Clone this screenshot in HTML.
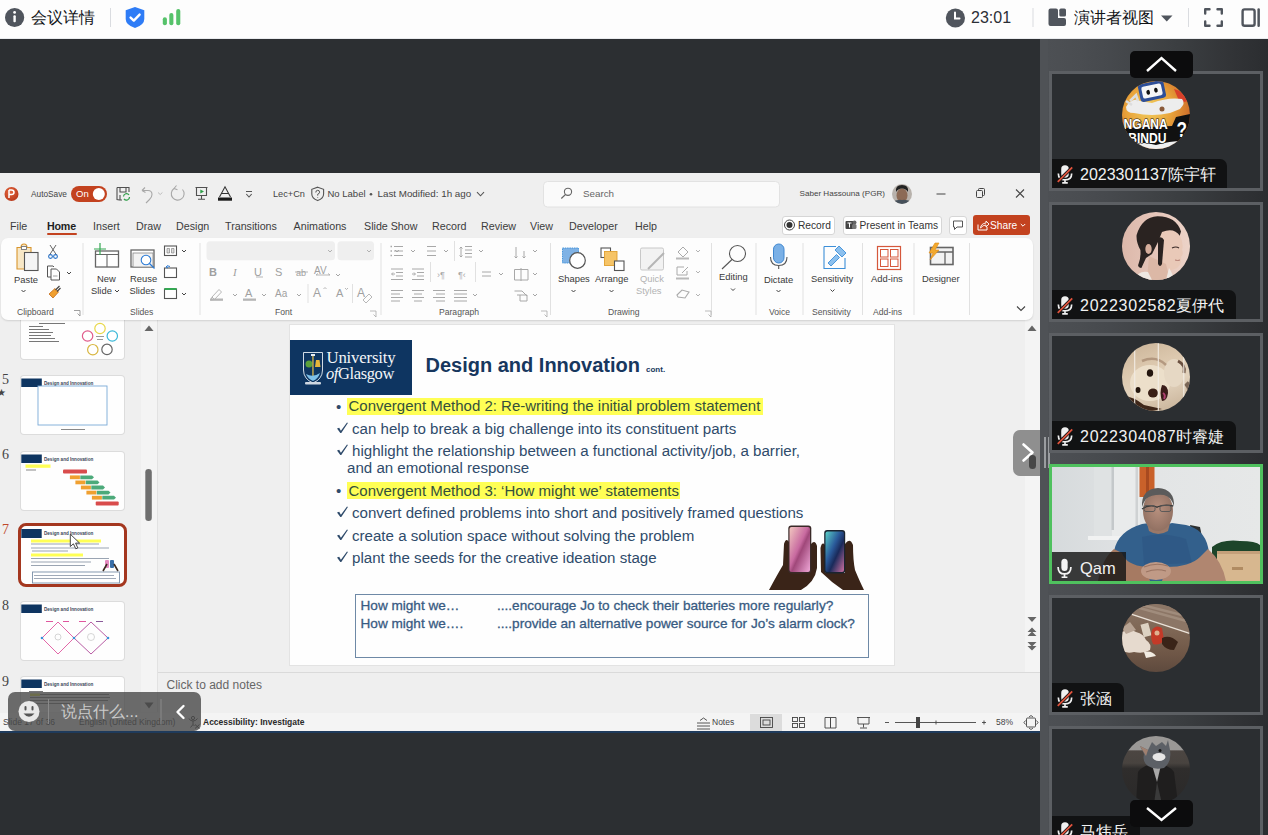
<!DOCTYPE html>
<html><head><meta charset="utf-8">
<style>
*{margin:0;padding:0;box-sizing:border-box}
html,body{width:1268px;height:835px;overflow:hidden;background:#2c2f32;font-family:"Liberation Sans",sans-serif;position:relative}
.a{position:absolute}
.t{position:absolute;white-space:nowrap;line-height:1}
/* top bar */
#top{left:0;top:0;width:1268px;height:39px;background:#fdfdfd;border-bottom:1px solid #e9ebee}
/* right panel */
#rp{left:1040px;top:39px;width:228px;height:796px;background:linear-gradient(90deg,#4f5256 0,#4f5256 8px,#4d5054 8px,#4a4d51 40px,#46494d 70px,#404346 110px,#393c3f 150px,#323437 190px,#2b2d30 228px)}
.tile{position:absolute;left:9px;width:214px;height:120px;border:3px solid #5c5f63;background:#2b2e31;overflow:hidden}
.lbl{position:absolute;left:0;bottom:0;height:29px;background:#111213;border-top-right-radius:7px;color:#f2f2f2;font-size:16px;line-height:31px;padding-left:28px;padding-right:11.5px;white-space:nowrap}
.lbl b{font-weight:normal;letter-spacing:0.75px}
.av{position:absolute;left:71px;top:10px;width:68px;height:68px;border-radius:50%;overflow:hidden}
/* ppt */
#ppt{left:0;top:173px;width:1040px;height:558px;background:#efefef;overflow:hidden}
</style></head><body>

<div id="top" class="a">
<svg class="a" style="left:0;top:0" width="1268" height="38">
 <circle cx="14.6" cy="17.5" r="9.6" fill="#50555d"/>
 <rect x="13.4" y="15.2" width="2.4" height="7" rx="1" fill="#fff"/>
 <circle cx="14.6" cy="12.4" r="1.4" fill="#fff"/>
 <rect x="110" y="8" width="1" height="19" fill="#dadce0"/>
 <path d="M135 7 L144.3 10.2 L144.3 19 Q144.3 25 135 28 Q125.7 25 125.7 19 L125.7 10.2 Z" fill="#2e7cf6"/>
 <path d="M130.6 17.6 L133.8 20.6 L139.6 14.6" stroke="#fff" stroke-width="2.4" fill="none" stroke-linecap="round" stroke-linejoin="round"/>
 <rect x="162.8" y="17.3" width="4.1" height="8" rx="2" fill="#55c26a"/>
 <rect x="169.3" y="13" width="4.1" height="12.3" rx="2" fill="#55c26a"/>
 <rect x="176.2" y="9" width="4.1" height="16.3" rx="2" fill="#55c26a"/>
 <circle cx="955.4" cy="18" r="9.6" fill="#50555d"/>
 <path d="M955 12.5 L955 18.5 L959.5 18.5" stroke="#fff" stroke-width="2" fill="none" stroke-linecap="round"/>
 <rect x="1032.5" y="8" width="1" height="19" fill="#dadce0"/>
 <path d="M1050.5 8.6 H1056 Q1058 8.6 1058 10.6 V18 H1064 Q1066 18 1066 20 V24 Q1066 26 1064 26 H1050.5 Q1048.5 26 1048.5 24 V10.6 Q1048.5 8.6 1050.5 8.6 Z" fill="#50555d"/>
 <rect x="1059.3" y="8.6" width="6.7" height="8" rx="1.6" fill="#50555d"/>
 <path d="M1161 15.5 H1172.5 L1166.75 21.5 Z" fill="#50555d"/>
 <rect x="1188" y="8" width="1" height="19" fill="#dadce0"/>
 <path d="M1205.2 13.5 V9.3 H1209.5 M1217.5 9.3 H1221.8 V13.5 M1221.8 21.5 V25.8 H1217.5 M1209.5 25.8 H1205.2 V21.5" stroke="#50555d" stroke-width="2.4" fill="none" stroke-linecap="round" stroke-linejoin="round"/>
 <rect x="1242.6" y="9.4" width="12" height="16.4" rx="2" stroke="#50555d" stroke-width="2.4" fill="none"/>
 <rect x="1257.4" y="8.2" width="2.5" height="18.8" rx="1.2" fill="#50555d"/>
</svg>
<div class="t" style="left:31px;top:9.5px;font-size:16px;color:#111317">会议详情</div>
<div class="t" style="left:971px;top:10px;font-size:16px;color:#2b2f36">23:01</div>
<div class="t" style="left:1074px;top:9.5px;font-size:16px;color:#111317">演讲者视图</div>
</div>
<div id="rp" class="a">
 <div class="a" style="left:4px;top:398px;width:1.5px;height:31px;background:#9a9da0"></div>
 <div class="a" style="left:8px;top:398px;width:1.5px;height:31px;background:#9a9da0"></div>
 <div class="tile" style="top:32px">
  <div class="av" style="left:69.5px;top:6.5px;background:radial-gradient(circle at 40% 40%,#f2d060 0,#e8a23a 40%,#d0702a 70%,#a04a20 100%)">
   <svg width="68" height="68">
    <path d="M52 8 Q62 10 66 20 L58 22Z" fill="#d8402a"/>
    <path d="M4 26 Q10 16 18 20 L30 22 Q46 16 60 18 Q64 22 58 28 L48 32 Q30 36 12 32 Q4 32 4 26Z" fill="#ededed"/>
    <path d="M8 20 L14 14 L16 20 M10 24 L4 20" stroke="#ddd" stroke-width="2.5" fill="none"/>
    <g transform="rotate(-12 30 10)"><rect x="17" y="1" width="26" height="18" rx="3" fill="#2e4f98"/><rect x="20" y="4" width="20" height="12" rx="2" fill="#f6f6f6"/><ellipse cx="26" cy="10.5" rx="1.8" ry="2.5" fill="#111"/><ellipse cx="34" cy="10" rx="1.8" ry="2.5" fill="#111"/></g>
    <circle cx="40" cy="28" r="2.5" fill="#8a5a3a"/>
    <path d="M0 47 L50 45 L54 36 L68 33 V60 L56 64 Q40 66 20 66 L0 64Z" fill="#111"/>
    <path d="M4 63 Q20 60 34 64 Q48 60 60 60 L56 68 H8Z" fill="#f0f0f0"/>
    <g transform="scale(0.78 1)" font-family="Liberation Sans" font-weight="bold" fill="#fff" stroke="#111" stroke-width="1.2" paint-order="stroke">
     <text x="2" y="48" font-size="15.5">NGANA</text>
     <text x="8" y="62" font-size="15.5">BINDU</text>
     <text x="70" y="56" font-size="22">?</text>
    </g>
   </svg>
  </div>
  <div class="lbl"><svg class="a" style="left:3px;top:5px" width="20" height="20" viewBox="0 0 18 18"><path d="M5.6 9 V4.6 Q5.6 1.2 9 1.2 Q12.4 1.2 12.4 4.6 V9 Q12.4 12.4 9 12.4 Q5.6 12.4 5.6 9Z" fill="#f0f0f0"/><path d="M3 8.5 Q3 14.3 9 14.3 Q15 14.3 15 8.5 M9 14.3 V17 M6.5 17 H11.5" stroke="#f0f0f0" stroke-width="1.5" fill="none"/><path d="M2.5 16 L15.5 3" stroke="#111" stroke-width="3"/><path d="M2.5 16 L15.5 3" stroke="#e0533d" stroke-width="1.6"/></svg>2023301137陈宇轩</div>
 </div>
 <div class="tile" style="top:163px">
  <div class="av" style="left:69.5px;top:6.5px;background:linear-gradient(90deg,#dcb8aa 0,#e6c6ba 50%,#ecd3c8 100%)">
   <svg width="68" height="68">
    <path d="M14.6 23 Q20 5 35.4 4.2 Q54 4 59 19.4 L57 26 Q50 20 46 20 L36 30 L30 42 L24 46 L19.4 56 Q15 55 16.5 52 Q19 46 18.4 38 Q14 30 14.6 23Z" fill="#2a2321"/>
    <path d="M40 20 Q52 15 58 24 Q62 32 60 38 Q62 42 59 45 Q60 52 55 56 Q48 60 42 57 L36 50 L36 30Z" fill="#e9c9b8"/>
    <path d="M27 44 L44 52 L48 68 H25Z" fill="#dcb8a6"/>
    <ellipse cx="26.5" cy="37" rx="3.2" ry="5" fill="#d6ae9c"/>
    <path d="M36 26 Q40 24 42 28 L40 52 Q38 56 36 52Z" fill="#2a2321"/>
    <path d="M13 68 Q16 58 26 60 L30 68Z" fill="#eee8e2"/>
    <path d="M44 68 L47 56 Q50 60 52 68Z" fill="#eee8e2"/>
    <path d="M50 36 Q54 34 57 36" stroke="#3a2a26" stroke-width="1.1" fill="none"/>
    <path d="M53 48 Q56 49 58 48" stroke="#b07a70" stroke-width="1" fill="none"/>
   </svg>
  </div>
  <div class="lbl"><svg class="a" style="left:3px;top:5px" width="20" height="20" viewBox="0 0 18 18"><path d="M5.6 9 V4.6 Q5.6 1.2 9 1.2 Q12.4 1.2 12.4 4.6 V9 Q12.4 12.4 9 12.4 Q5.6 12.4 5.6 9Z" fill="#f0f0f0"/><path d="M3 8.5 Q3 14.3 9 14.3 Q15 14.3 15 8.5 M9 14.3 V17 M6.5 17 H11.5" stroke="#f0f0f0" stroke-width="1.5" fill="none"/><path d="M2.5 16 L15.5 3" stroke="#111" stroke-width="3"/><path d="M2.5 16 L15.5 3" stroke="#e0533d" stroke-width="1.6"/></svg><b>2022302582</b>夏伊代</div>
 </div>
 <div class="tile" style="top:294px">
  <div class="av" style="left:69.5px;top:6.5px;background:linear-gradient(160deg,#c9b296 0,#dcc8ae 35%,#e2d2bc 60%,#c4ae94 100%)">
   <svg width="68" height="68">
    <ellipse cx="28" cy="40" rx="20" ry="18" fill="#ecdfca"/>
    <ellipse cx="52" cy="30" rx="10" ry="14" fill="#e6d8c4"/>
    <path d="M20 18 Q34 12 44 22" stroke="#9a7a62" stroke-width="2.5" fill="none" opacity="0.6"/>
    <ellipse cx="28" cy="30" rx="3.2" ry="3.8" fill="#24160e"/>
    <ellipse cx="16" cy="47" rx="2.5" ry="3" fill="#24160e"/>
    <ellipse cx="31" cy="50" rx="5" ry="4.5" fill="#3a2016"/>
    <path d="M40 42 Q46 42 46 50 Q45 58 40 58 Q37 50 40 42Z" fill="#3a1c18"/>
    <path d="M41 50 Q44 52 42 56" stroke="#b04070" stroke-width="2" fill="none"/>
    <path d="M0 52 Q12 54 22 62 L40 66 L30 68 H0Z" fill="#3e2619"/>
    <path d="M56 18 Q64 22 62 30" stroke="#6a5040" stroke-width="3" fill="none"/>
    <path d="M64 40 Q70 46 66 52" stroke="#7a6656" stroke-width="5" fill="none"/>
    <path d="M12.7 0 V68 M36.3 0 V68 M61.8 0 V68" stroke="#f2ece4" stroke-width="1.1"/>
   </svg>
  </div>
  <div class="lbl"><svg class="a" style="left:3px;top:5px" width="20" height="20" viewBox="0 0 18 18"><path d="M5.6 9 V4.6 Q5.6 1.2 9 1.2 Q12.4 1.2 12.4 4.6 V9 Q12.4 12.4 9 12.4 Q5.6 12.4 5.6 9Z" fill="#f0f0f0"/><path d="M3 8.5 Q3 14.3 9 14.3 Q15 14.3 15 8.5 M9 14.3 V17 M6.5 17 H11.5" stroke="#f0f0f0" stroke-width="1.5" fill="none"/><path d="M2.5 16 L15.5 3" stroke="#111" stroke-width="3"/><path d="M2.5 16 L15.5 3" stroke="#e0533d" stroke-width="1.6"/></svg><b>2022304087</b>时睿婕</div>
 </div>
 <div class="tile" style="top:425px;border-color:#4fc15e;background:#dfe2e3">
  <svg class="a" style="left:0;top:0" width="208" height="114">
   <defs>
    <linearGradient id="wallg" x1="0" y1="0" x2="1" y2="0"><stop offset="0" stop-color="#d6dadc"/><stop offset="0.5" stop-color="#e3e5e6"/><stop offset="1" stop-color="#e6e8e8"/></linearGradient>
    <radialGradient id="faceg" cx="0.5" cy="0.45" r="0.6"><stop offset="0" stop-color="#b8907e"/><stop offset="1" stop-color="#8e6e60"/></radialGradient>
   </defs>
   <rect x="0" y="0" width="208" height="114" fill="url(#wallg)"/>
   <rect x="42" y="0" width="46" height="72" fill="#e9ebeb"/>
   <rect x="42" y="0" width="18" height="72" fill="#dfe2e3"/>
   <rect x="59.5" y="0" width="2.5" height="63" fill="#c4c8ca"/>
   <rect x="83.5" y="0" width="2.5" height="63" fill="#cfd2d3"/>
   <rect x="36" y="69" width="55" height="4" fill="#f1f2f2"/>
   <rect x="87.5" y="0" width="15" height="30" fill="#c9612a"/>
   <rect x="94" y="0" width="3" height="30" fill="#a84a20"/>
   <path d="M138 58 L148 60 L150 70 L140 68Z" fill="#2c2f30"/>
   <path d="M160 80 Q170 72 188 74 Q204 74 208 78 V92 H160Z" fill="#1d452a"/>
   <rect x="165" y="84" width="43" height="30" fill="#d7b78f"/>
   <rect x="165" y="84" width="43" height="3" fill="#c4a07a"/>
   <rect x="180" y="100" width="11" height="3" fill="#b08b62"/>
   <path d="M64 114 L62 84 Q66 64 90 57 L104 55 Q110 60 120 56 L134 58 Q152 62 156 80 L160 100 L146 114Z" fill="#33608c"/>
   <path d="M90 70 Q110 64 134 72 L140 96 L92 98Z" fill="#2d5783" opacity="0.7"/>
   <path d="M46 114 Q50 92 62 82 L70 86 Q74 98 94 100 L98 114Z" fill="#a67a62"/>
   <path d="M174 114 Q170 94 156 82 L148 90 Q138 100 114 100 L110 114Z" fill="#b08670"/>
   <ellipse cx="104" cy="104" rx="15" ry="9" fill="#c09a86"/>
   <path d="M92 100 Q104 95 116 99 M94 105 Q104 101 114 104" stroke="#9a7462" stroke-width="1.1" fill="none"/>
   <path d="M95 56 L97 64 Q106 70 116 64 L118 56Z" fill="#9a7868"/>
   <ellipse cx="106" cy="44" rx="15" ry="20" fill="url(#faceg)"/>
   <path d="M90 40 Q89 22 106 21 Q123 22 122 40 Q120 30 112 28 Q100 27 94 32 Q91 36 90 40Z" fill="#5b5b5b"/>
   <path d="M90 42 Q97 37 105 40 Q113 37 121 39 M105 40 V41" stroke="#3a3a3a" stroke-width="1.3" fill="none"/>
   <rect x="92" y="38.5" width="11" height="6" rx="2" fill="none" stroke="#555" stroke-width="0.9"/>
   <rect x="108" y="38.5" width="11" height="6" rx="2" fill="none" stroke="#555" stroke-width="0.9"/>
   <path d="M0 85 H74 V114 H0Z" fill="#151515" opacity="0.82"/>
  </svg>
  <div class="lbl" style="width:74px;background:transparent;border-radius:0;padding-left:28px;line-height:32px;font-size:16.5px"><svg class="a" style="left:2px;top:4.5px" width="21" height="21" viewBox="0 0 18 18"><path d="M6.3 9 V4.5 Q6.3 1.5 9 1.5 Q11.7 1.5 11.7 4.5 V9 Q11.7 12 9 12 Q6.3 12 6.3 9Z" fill="#f4f4f4"/><path d="M3.5 8.5 Q3.5 14.5 9 14.5 Q14.5 14.5 14.5 8.5 M9 14.5 V17.5 M6.5 17.5 H11.5" stroke="#f4f4f4" stroke-width="1.5" fill="none"/></svg>Qam</div>
 </div>
 <div class="tile" style="top:555.5px">
  <div class="av" style="left:69.5px;top:6.5px;background:linear-gradient(180deg,#8a7464 0,#7e6654 40%,#6e5646 75%,#5e4a3e 100%)">
   <svg width="68" height="68">
    <path d="M0 0 H68 V29 L10 10 L0 12Z" fill="#8c7666"/>
    <path d="M14 3 L68 18 M20 1 L68 13" stroke="#a08c7c" stroke-width="2.5"/>
    <path d="M9.9 10.4 L67.5 29.3" stroke="#ece4da" stroke-width="1.4"/>
    <path d="M0 28 Q8 24 14 28 Q22 30 24 36 Q30 40 28 46 Q22 50 12 48 Q4 50 0 46Z" fill="#e6dace"/>
    <path d="M0 24 L8 18 L14 26 L4 30Z" fill="#b8a494"/>
    <rect x="20" y="19.5" width="8" height="13" fill="#ddd2c2" transform="rotate(-15 24 26)"/>
    <path d="M30 26 Q34 20 40 24 L42 36 Q38 42 31 40 Q28 34 30 26Z" fill="#c43a28"/>
    <circle cx="35" cy="29" r="2.5" fill="#e0b090"/>
    <path d="M40 34 Q48 30 56 38 L52 46 Q44 46 40 40Z" fill="#3a2418"/>
    <path d="M22 48 Q30 46 34 52 L24 54Z" fill="#f2ece2"/>
   </svg>
  </div>
  <div class="lbl"><svg class="a" style="left:3px;top:5px" width="20" height="20" viewBox="0 0 18 18"><path d="M5.6 9 V4.6 Q5.6 1.2 9 1.2 Q12.4 1.2 12.4 4.6 V9 Q12.4 12.4 9 12.4 Q5.6 12.4 5.6 9Z" fill="#f0f0f0"/><path d="M3 8.5 Q3 14.3 9 14.3 Q15 14.3 15 8.5 M9 14.3 V17 M6.5 17 H11.5" stroke="#f0f0f0" stroke-width="1.5" fill="none"/><path d="M2.5 16 L15.5 3" stroke="#111" stroke-width="3"/><path d="M2.5 16 L15.5 3" stroke="#e0533d" stroke-width="1.6"/></svg>张涵</div>
 </div>
 <div class="tile" style="top:686.5px">
  <div class="av" style="left:69.5px;top:7px;background:linear-gradient(180deg,#9a9896 0,#9a9896 20%,#4c4642 22%,#48433f 40%,#2f2d2c 48%,#2a2929 100%)">
   <svg width="68" height="68">
    <path d="M14 68 L16 36 Q22 28 34 28 Q46 28 52 36 L56 68Z" fill="#1f1e1e"/>
    <path d="M30 29 L35 46 L39 29Z" fill="#a8a8a8"/>
    <path d="M35 46 L32 68 H40Z" fill="#3a3a3a"/>
    <path d="M18 10 L26 14 L30 6 L34 10 L40 6 L44 10 L46 4 L48 14 Q50 26 42 32 Q32 34 26 30 Q20 26 22 18Z" fill="#5c6066"/>
    <path d="M18 10 L26 14 L24 20Z" fill="#a08070"/>
    <ellipse cx="37" cy="21" rx="6.5" ry="4" fill="#e6e6e6"/>
    <circle cx="38" cy="14.5" r="1.5" fill="#111"/>
   </svg>
  </div>
  <div class="lbl" style="bottom:auto;top:87px"><svg class="a" style="left:3px;top:5px" width="20" height="20" viewBox="0 0 18 18"><path d="M5.6 9 V4.6 Q5.6 1.2 9 1.2 Q12.4 1.2 12.4 4.6 V9 Q12.4 12.4 9 12.4 Q5.6 12.4 5.6 9Z" fill="#f0f0f0"/><path d="M3 8.5 Q3 14.3 9 14.3 Q15 14.3 15 8.5 M9 14.3 V17 M6.5 17 H11.5" stroke="#f0f0f0" stroke-width="1.5" fill="none"/><path d="M2.5 16 L15.5 3" stroke="#111" stroke-width="3"/><path d="M2.5 16 L15.5 3" stroke="#e0533d" stroke-width="1.6"/></svg>马炜岳</div>
 </div>
 <div class="a" style="left:89.5px;top:11.5px;width:63px;height:27px;background:#0c0c0d;border-radius:5px"></div>
 <svg class="a" style="left:89.5px;top:11.5px" width="63" height="27"><path d="M17 20 L31.5 7 L46 20" stroke="#fff" stroke-width="2.4" fill="none"/></svg>
 <div class="a" style="left:89.5px;top:761px;width:63.5px;height:26.5px;background:#0c0c0d;border-radius:5px"></div>
 <svg class="a" style="left:89.5px;top:761px" width="63" height="27"><path d="M17 8 L31.5 20 L46 8" stroke="#fff" stroke-width="2.4" fill="none"/></svg>
</div>
<div id="ppt" class="a"></div>
<!-- PPT title bar -->
<svg class="a" style="left:0;top:173px" width="1040" height="64">
 <defs><radialGradient id="pg" cx="0.4" cy="0.35" r="0.7"><stop offset="0" stop-color="#e5673f"/><stop offset="1" stop-color="#b7381a"/></radialGradient></defs>
 <circle cx="11.5" cy="21" r="7" fill="url(#pg)"/>
 <path d="M9 17 V25 M9 17 H11.5 Q14 17 14 19.3 Q14 21.6 11.5 21.6 H9" stroke="#fff" stroke-width="1.5" fill="none"/>
 <rect x="71" y="13" width="36" height="16" rx="8" fill="#c3421f"/>
 <circle cx="98.8" cy="21" r="6" fill="#fff"/>
 <!-- save -->
 <path d="M117 14.5 H129 V19 M117 14.5 V26.5 L119.5 27 H122 M120 14.5 V19 H126 V14.5 M120 22 V26.5" stroke="#505050" stroke-width="1.1" fill="none"/>
 <path d="M123.5 23.5 A3 3 0 0 1 129 22 M129.5 24 A3 3 0 0 1 124 25.8" stroke="#2e9e48" stroke-width="1.2" fill="none"/>
 <!-- undo -->
 <path d="M142 17.5 L145 14.5 M142 17.5 L145.5 19.5 M142.5 17.5 H148 Q152 17.5 152 21.5 Q152 24 149.5 26.5 L146 30" stroke="#a8a8a8" stroke-width="1.1" fill="none"/>
 <path d="M158 19.5 L160.2 21.5 L162.4 19.5" stroke="#b5b5b5" stroke-width="0.9" fill="none"/>
 <!-- redo -->
 <path d="M174 15.5 A6.4 6.4 0 1 0 182.5 16.5 M174 15.5 L176.5 12.5 M174 15.5 L177.5 16.8" stroke="#a8a8a8" stroke-width="1.1" fill="none"/>
 <!-- present -->
 <path d="M195.5 14.5 H207.5 M196.5 14.5 V22.5 H206.5 V14.5 M201.5 22.5 V26 M198 26.3 H205" stroke="#505050" stroke-width="1.1" fill="none"/>
 <path d="M200.3 16.6 L204 18.6 L200.3 20.6 Z" fill="#2e9e48"/>
 <!-- A -->
 <path d="M219.5 24 L225 13.8 L230.5 24 M221.3 20.5 H228.7" stroke="#333" stroke-width="1.1" fill="none"/>
 <rect x="218" y="24.5" width="14" height="3.2" fill="#1a1a1a"/>
 <!-- qat more -->
 <path d="M246 18.5 H252 M246.3 21 L249 24 L251.7 21" stroke="#555" stroke-width="1.1" fill="none"/>
 <!-- shield -->
 <path d="M317.7 14.2 L323.6 16.3 V21 Q323.6 25.5 317.7 27.6 Q311.8 25.5 311.8 21 V16.3 Z" stroke="#555" stroke-width="1.1" fill="none"/>
 <path d="M315.8 19.5 Q315.8 17.3 317.7 17.3 Q319.6 17.3 319.6 19.2 Q319.6 20.6 317.7 21.2 V22.6 M317.7 24.2 V24.8" stroke="#555" stroke-width="1" fill="none"/>
 <circle cx="371" cy="21.3" r="1.3" fill="#555"/>
 <path d="M477 19.2 L480.5 22.8 L484 19.2" stroke="#555" stroke-width="1.1" fill="none"/>
 <!-- search box -->
 <rect x="543.5" y="8.5" width="236" height="25.5" rx="4" fill="#fafafa" stroke="#e2e2e2"/>
 <circle cx="568" cy="18.8" r="3.6" stroke="#666" stroke-width="1.1" fill="none"/>
 <path d="M565.5 21.5 L561.3 25.5" stroke="#666" stroke-width="1.1"/>
 <!-- avatar -->
 <clipPath id="avc"><circle cx="902" cy="21" r="10"/></clipPath>
 <g clip-path="url(#avc)">
 <rect x="892" y="11" width="20" height="20" fill="#b8b2ac"/>
 <ellipse cx="902" cy="22.5" rx="5.5" ry="7" fill="#8c6a55"/>
 <path d="M896 19 Q895 12 902 12 Q909 12 908 19 Q906 15.5 902 15.5 Q898 15.5 896 19Z" fill="#222"/>
 <path d="M890 32 Q894 26 902 27 Q910 26 914 32Z" fill="#46505a"/>
 </g>
 <!-- window controls -->
 <rect x="936.5" y="20.5" width="9" height="1" fill="#444"/>
 <rect x="976.5" y="17.5" width="6" height="7" rx="1" stroke="#444" stroke-width="1" fill="none"/>
 <path d="M978.5 17.5 V16.5 Q978.5 15.5 979.5 15.5 H983.5 Q984.5 15.5 984.5 16.5 V21.5 Q984.5 22.5 983.5 22.5 H982.5" stroke="#444" stroke-width="1" fill="none"/>
 <path d="M1016 16.5 L1024 24.5 M1024 16.5 L1016 24.5" stroke="#444" stroke-width="1.1"/>
</svg>
<div class="t" style="left:31px;top:189.8px;font-size:8.3px;color:#444">AutoSave</div>
<div class="t" style="left:76px;top:189px;font-size:9.5px;color:#fff">On</div>
<div class="t" style="left:273px;top:189.5px;font-size:9.2px;color:#444">Lec+Cn</div>
<div class="t" style="left:327.5px;top:188.8px;font-size:9.5px;color:#444">No Label</div>
<div class="t" style="left:377.5px;top:188.8px;font-size:9.8px;color:#444">Last Modified: 1h ago</div>
<div class="t" style="left:583px;top:188.5px;font-size:9.8px;color:#666">Search</div>
<div class="t" style="left:799.5px;top:189.5px;font-size:8.1px;color:#444">Saber Hassouna (PGR)</div>
<!-- tabs -->
<div class="t" style="left:10px;top:220.5px;font-size:10.7px;color:#3c3c3c">File</div>
<div class="t" style="left:47px;top:220.5px;font-size:10.7px;color:#1f1f1f;font-weight:bold;letter-spacing:-0.2px">Home</div>
<div class="a" style="left:47px;top:233px;width:30px;height:2px;background:#c3421f;border-radius:1px"></div>
<div class="t" style="left:93px;top:220.5px;font-size:10.7px;color:#3c3c3c">Insert</div>
<div class="t" style="left:136px;top:220.5px;font-size:10.7px;color:#3c3c3c">Draw</div>
<div class="t" style="left:176px;top:220.5px;font-size:10.7px;color:#3c3c3c">Design</div>
<div class="t" style="left:225px;top:220.5px;font-size:10.7px;color:#3c3c3c">Transitions</div>
<div class="t" style="left:293.6px;top:220.5px;font-size:10.7px;color:#3c3c3c">Animations</div>
<div class="t" style="left:364px;top:220.5px;font-size:10.7px;color:#3c3c3c">Slide Show</div>
<div class="t" style="left:432px;top:220.5px;font-size:10.7px;color:#3c3c3c">Record</div>
<div class="t" style="left:481px;top:220.5px;font-size:10.7px;color:#3c3c3c">Review</div>
<div class="t" style="left:530px;top:220.5px;font-size:10.7px;color:#3c3c3c">View</div>
<div class="t" style="left:569px;top:220.5px;font-size:10.7px;color:#3c3c3c">Developer</div>
<div class="t" style="left:635px;top:220.5px;font-size:10.7px;color:#3c3c3c">Help</div>
<!-- right buttons -->
<div class="a" style="left:782px;top:215.5px;width:53px;height:19.5px;background:#fff;border:1px solid #d6d6d6;border-radius:3px"></div>
<svg class="a" style="left:783px;top:218px" width="14" height="14"><circle cx="6.5" cy="7" r="5" stroke="#444" stroke-width="1" fill="none"/><circle cx="6.5" cy="7" r="3" fill="#333"/></svg>
<div class="t" style="left:798px;top:221.3px;font-size:10.2px;color:#333">Record</div>
<div class="a" style="left:843px;top:215.5px;width:99px;height:19.5px;background:#fff;border:1px solid #d6d6d6;border-radius:3px"></div>
<svg class="a" style="left:844px;top:218px" width="14" height="14"><rect x="1.5" y="3" width="8" height="8" rx="1" fill="#444"/><circle cx="10.5" cy="4.5" r="2" fill="#666"/><rect x="8" y="6" width="4.5" height="5" rx="1.5" fill="#777"/><path d="M3.5 5 H7.5 M5.5 5 V9.5" stroke="#fff" stroke-width="1"/></svg>
<div class="t" style="left:859.5px;top:221.3px;font-size:10.2px;color:#333">Present in Teams</div>
<div class="a" style="left:949px;top:215.5px;width:18px;height:19.5px;background:#fff;border:1px solid #d6d6d6;border-radius:3px"></div>
<svg class="a" style="left:952px;top:219px" width="12" height="12"><path d="M1.5 2 H10.5 V8 H5 L2.5 10.5 V8 H1.5 Z" stroke="#444" stroke-width="0.9" fill="none"/></svg>
<div class="a" style="left:973px;top:215px;width:57px;height:20px;background:#c3421f;border-radius:3px"></div>
<svg class="a" style="left:976px;top:218px" width="14" height="14"><path d="M2 6.5 V12 H11 V9" stroke="#fff" stroke-width="1" fill="none"/><path d="M4.5 10 Q5 5.5 10 5 V3 L13 6 L10 9 V7 Q7 7 4.5 10Z" stroke="#fff" stroke-width="0.9" fill="none"/></svg>
<div class="t" style="left:990px;top:221.3px;font-size:10.2px;color:#fff">Share</div>
<svg class="a" style="left:1020px;top:223px" width="6" height="5"><path d="M0.8 1 L3 3.2 L5.2 1" stroke="#fff" stroke-width="1" fill="none"/></svg>


<!-- editing area -->
<div class="a" style="left:141px;top:320px;width:16px;height:392px;background:#f4f4f4"></div>
<div class="a" style="left:1025px;top:320px;width:15px;height:352px;background:#f4f4f4"></div>
<svg class="a" style="left:141px;top:320px" width="16" height="392">
 <path d="M3.5 11 L8 5.5 L12.5 11Z" fill="#666"/>
 <rect x="4.3" y="149" width="6.5" height="52" rx="3.2" fill="#6f6f6f"/>
 <path d="M3.5 382.5 L8 388.5 L12.5 382.5Z" fill="#555"/>
</svg>
<svg class="a" style="left:1025px;top:320px" width="15" height="392">
 <path d="M2.5 11 L7 5.5 L11.5 11Z" fill="#666"/>
 <path d="M2.5 297 L7 302 L11.5 297Z" fill="#666"/>
 <path d="M2.5 312 L7 307.5 L11.5 312Z M2.5 316 L7 311.5 L11.5 316Z" fill="#666"/>
 <path d="M2.5 322 L7 326.5 L11.5 322Z M2.5 326 L7 330.5 L11.5 326Z" fill="#666"/>
</svg>
<div class="a" style="left:157px;top:672px;width:883px;height:1px;background:#dadada"></div>
<div class="a" style="left:157px;top:320px;width:1px;height:392px;background:#e2e2e2"></div>
<div class="t" style="left:166.5px;top:679px;font-size:12px;color:#666">Click to add notes</div>
<!-- status bar -->
<div class="a" style="left:0;top:712.5px;width:1040px;height:19px;background:#f4f4f4"></div>
<div class="a" style="left:0;top:731px;width:1040px;height:2px;background:#1f3b5c"></div>
<div style="font-size:8.5px;color:#444">
<div class="t" style="left:3px;top:718px">Slide 17 of 36</div>
<div class="t" style="left:79px;top:718px">English (United Kingdom)</div>
<div class="t" style="left:203px;top:718px;font-weight:bold;color:#2a2a2a;font-size:8.5px">Accessibility: Investigate</div>
<div class="t" style="left:712px;top:718px">Notes</div>
<div class="t" style="left:996px;top:718px">58%</div>
</div>
<div class="a" style="left:749.5px;top:713.5px;width:32px;height:17.5px;background:#dcdcdc"></div>
<svg class="a" style="left:180px;top:712px" width="860" height="20">
 <circle cx="13" cy="6" r="1.6" fill="none" stroke="#333" stroke-width="0.9"/><path d="M9 6.5 Q10 9 13 9 Q16 9 17.5 6.5 M13 9 V12.5 L10.5 15.5 M13 12.5 L14.5 14" stroke="#333" stroke-width="0.9" fill="none"/><path d="M15 12.5 L19.5 16.5 M19.5 12.5 L15 16.5" stroke="#333" stroke-width="0.9"/>
 <g stroke="#444" stroke-width="0.9" fill="none">
  <path d="M517 11 H530 M517 14 H530 M517 17 H530 M520 8.5 L523.5 6 L527 8.5"/>
  <rect x="580.5" y="5.5" width="12" height="10"/><rect x="583" y="8" width="7" height="5"/>
  <rect x="612.5" y="5.5" width="5" height="4"/><rect x="619.5" y="5.5" width="5" height="4"/><rect x="612.5" y="11.5" width="5" height="4"/><rect x="619.5" y="11.5" width="5" height="4"/>
  <path d="M645 5.5 H650.5 V16 H645Z M650.5 5.5 H656 V16 H650.5Z"/>
  <path d="M677 5.5 H690 M678 5.5 V12 H689 V5.5 M683.5 12 V15.5 M680 16 H687"/>
  <path d="M705 10.5 H709 M802 10.5 H806 M804 8.5 V12.5"/>
  <path d="M715 10.5 H796"/>
  <path d="M756 8.5 V12.5"/>
  <path d="M849 5 L851 3.5 L853 5 M849 16 L851 17.5 L853 16 M845.5 8.5 L844 10.5 L845.5 12.5 M856.5 8.5 L858 10.5 L856.5 12.5"/>
  <rect x="846.5" y="6" width="9" height="9" rx="1"/>
 </g>
 <rect x="736" y="5" width="4" height="11" fill="#444"/>
</svg>
<!-- slide -->
<div class="a" style="left:289.5px;top:325px;width:604.5px;height:340px;background:#fefefe;box-shadow:0 0 0 1px #e3e3e3"></div>
<div class="a" style="left:289.5px;top:340px;width:122px;height:54.5px;background:#0e3561"></div>
<svg class="a" style="left:300px;top:350px" width="28" height="36">
 <path d="M3.5 2.5 H22.5 V20 Q22.5 29 13 33 Q3.5 29 3.5 20Z" fill="none" stroke="#e8eef4" stroke-width="0.9"/>
 <circle cx="9" cy="14" r="3.5" fill="#5aa03a"/><rect x="12.3" y="6" width="1.3" height="20" fill="#d9b64a"/>
 <path d="M16 10 L19.5 10 L20.5 17 L15 17Z" fill="#e6b43a"/><rect x="11" y="4" width="4" height="2" fill="#e8eef4"/>
 <path d="M6 24 Q13 28 20 23 Q18 29 13 31 Q8 29 6 24Z" fill="#7ec0e8"/>
 <rect x="5" y="32" width="16" height="2.5" rx="1" fill="#cfd8e2"/>
</svg>
<div class="t" style="left:326.5px;top:350px;font-family:'Liberation Serif',serif;font-size:16.8px;color:#f4f6f8;letter-spacing:-0.2px">University</div>
<div class="t" style="left:326px;top:365.5px;font-family:'Liberation Serif',serif;font-size:16.5px;color:#f4f6f8;letter-spacing:-0.4px"><i>of</i>Glasgow</div>
<div class="t" style="left:425.5px;top:355px;font-size:20px;font-weight:bold;color:#17375e">Design and Innovation</div>
<div class="t" style="left:646px;top:366px;font-size:8px;font-weight:bold;color:#17375e">cont.</div>
<div style="color:#2f4b6b;font-size:15.1px">
<div class="a" style="left:347px;top:397.5px;width:415.5px;height:17px;background:#ffff55"></div>
<div class="t" style="left:336px;top:398.5px">•</div>
<div class="t" style="left:348.5px;top:398px;color:#34503c;font-size:15px">Convergent Method 2: Re-writing the initial problem statement</div>
<div class="t" style="left:352px;top:421px">can help to break a big challenge into its constituent parts</div>
<div class="t" style="left:352px;top:443px">highlight the relationship between a functional activity/job, a barrier,</div>
<div class="t" style="left:347px;top:459.5px">and an emotional response</div>
<div class="a" style="left:347px;top:482px;width:333px;height:17px;background:#ffff55"></div>
<div class="t" style="left:336px;top:483px">•</div>
<div class="t" style="left:348.5px;top:482.5px;color:#34503c;font-size:15px">Convergent Method 3: ‘How might we’ statements</div>
<div class="t" style="left:352px;top:505px">convert defined problems into short and positively framed questions</div>
<div class="t" style="left:352px;top:528px">create a solution space without solving the problem</div>
<div class="t" style="left:352px;top:550px">plant the seeds for the creative ideation stage</div>
</div>
<svg class="a" style="left:0;top:0" width="900" height="600" fill="#2f4b6b"><path transform="translate(0 434.1)" d="M337 -5.5 L339.2 -6.3 L340.9 -3.3 L347 -11.6 L347.9 -11 L341.3 -1 L340.3 -1 Z"/><path transform="translate(0 456.1)" d="M337 -5.5 L339.2 -6.3 L340.9 -3.3 L347 -11.6 L347.9 -11 L341.3 -1 L340.3 -1 Z"/><path transform="translate(0 518.1)" d="M337 -5.5 L339.2 -6.3 L340.9 -3.3 L347 -11.6 L347.9 -11 L341.3 -1 L340.3 -1 Z"/><path transform="translate(0 541.1)" d="M337 -5.5 L339.2 -6.3 L340.9 -3.3 L347 -11.6 L347.9 -11 L341.3 -1 L340.3 -1 Z"/><path transform="translate(0 563.1)" d="M337 -5.5 L339.2 -6.3 L340.9 -3.3 L347 -11.6 L347.9 -11 L341.3 -1 L340.3 -1 Z"/></svg>
<div class="a" style="left:355px;top:594px;width:514px;height:63.5px;border:1.5px solid #6e89a6;background:#fefefe"></div>
<div style="color:#385b82;font-size:13.6px;-webkit-text-stroke:0.3px #385b82">
<div class="t" style="left:360.5px;top:599.3px">How might we…</div>
<div class="t" style="left:360.5px;top:617.3px">How might we….</div>
<div class="t" style="left:497px;top:599.3px">....encourage Jo to check their batteries more regularly?</div>
<div class="t" style="left:497px;top:617.3px">....provide an alternative power source for Jo’s alarm clock?</div>
</div>
<!-- thumbnails -->
<div class="a" style="left:0;top:320px;width:141px;height:392px;overflow:hidden">
 <div class="a" style="left:21px;top:-20px;width:102.5px;height:58.5px;background:#fefefe;border-radius:3px;box-shadow:0 0 0 1px #dcdcdc"></div>
 <svg class="a" style="left:21px;top:-20px" width="103" height="59">
  <g fill="#777"><rect x="18" y="23" width="26" height="1"/><rect x="8" y="26" width="14" height="1"/><rect x="8" y="29" width="20" height="1"/><rect x="8" y="32" width="24" height="1"/><rect x="8" y="35" width="22" height="1"/><rect x="8" y="38" width="26" height="1"/><rect x="8" y="41" width="30" height="1"/></g>
  <circle cx="66.6" cy="36" r="5.2" fill="#fff" stroke="#e05a8a" stroke-width="1.2"/>
  <circle cx="79" cy="28.5" r="5.2" fill="#fff" stroke="#e8d84a" stroke-width="1.2"/>
  <circle cx="91.3" cy="36" r="5.2" fill="#fff" stroke="#3bb8d8" stroke-width="1.2"/>
  <circle cx="86" cy="49.4" r="5.2" fill="#fff" stroke="#666" stroke-width="1.2"/>
  <circle cx="71.8" cy="49.7" r="5.2" fill="#fff" stroke="#d8b640" stroke-width="1.2"/>
  <g fill="#999"><rect x="75" y="36" width="8" height="1"/><rect x="76" y="39" width="6" height="1"/></g>
 </svg>
 <div class="t" style="left:2px;top:52.5px;font-family:'Liberation Serif',serif;font-size:14px;color:#444">5</div>
 <div class="t" style="left:-3px;top:68px;font-size:10px;color:#444">★</div>
 <div class="a" style="left:21px;top:56px;width:102.5px;height:57.5px;background:#fefefe;border-radius:3px;box-shadow:0 0 0 1px #dcdcdc"></div>
 <svg class="a" style="left:21px;top:56px" width="103" height="58">
  <rect x="0.3" y="2.5" width="20.5" height="8.5" fill="#0e3561"/>
  <text x="23" y="8.5" font-family="Liberation Sans" font-size="4.6" font-weight="bold" fill="#3a4658">Design and Innovation</text>
  <rect x="17" y="10" width="69" height="39" fill="#fff" stroke="#7aaad8" stroke-width="0.9"/>
  <rect x="40" y="53" width="24" height="1" fill="#888"/>
 </svg>
 <div class="t" style="left:2px;top:128px;font-family:'Liberation Serif',serif;font-size:14px;color:#444">6</div>
 <div class="a" style="left:21px;top:131.5px;width:102.5px;height:58px;background:#fefefe;border-radius:3px;box-shadow:0 0 0 1px #dcdcdc"></div>
 <svg class="a" style="left:21px;top:131.5px" width="103" height="58">
  <rect x="0.3" y="2.5" width="20.5" height="8.5" fill="#0e3561"/>
  <text x="23" y="8.5" font-family="Liberation Sans" font-size="4.6" font-weight="bold" fill="#3a4658">Design and Innovation</text>
  <rect x="4.5" y="12.5" width="25" height="3.3" fill="#ffff55"/><rect x="5" y="17.5" width="10" height="1" fill="#888"/>
  <rect x="42" y="17.5" width="24" height="4" rx="1" fill="#d94c4c"/>
  <g fill="#f0a030"><rect x="48.9" y="23.4" width="10" height="3.8"/><rect x="54.4" y="28.5" width="10" height="3.8"/><rect x="59.9" y="33.6" width="10" height="3.8"/><rect x="65.4" y="38.7" width="10" height="3.8"/><rect x="70.9" y="43.8" width="10" height="3.8"/></g>
  <g fill="#4caa7a"><path d="M59.3 23.4 H71 L73 25.3 L71 27.2 H59.3Z"/><path d="M64.8 28.5 H76.5 L78.5 30.4 L76.5 32.3 H64.8Z"/><path d="M70.3 33.6 H82 L84 35.5 L82 37.4 H70.3Z"/><path d="M75.8 38.7 H87.5 L89.5 40.6 L87.5 42.5 H75.8Z"/><path d="M81.3 43.8 H93 L95 45.7 L93 47.6 H81.3Z"/></g>
  <rect x="74.7" y="49.5" width="23" height="4" rx="1" fill="#d94c4c"/>
 </svg>
 <div class="t" style="left:2px;top:203px;font-family:'Liberation Serif',serif;font-size:14px;color:#c0482a">7</div>
 <div class="a" style="left:17.7px;top:203.2px;width:109.7px;height:64.3px;border:3.5px solid #a4371f;border-radius:8px;background:#fefefe"></div>
 <svg class="a" style="left:21px;top:206px" width="103" height="59">
  <rect x="0.3" y="3" width="20.4" height="9" fill="#0e3561"/>
  <text x="23" y="8.5" font-family="Liberation Sans" font-size="4.6" font-weight="bold" fill="#3a4658">Design and Innovation</text>
  <rect x="10" y="13.5" width="70" height="3" fill="#ffff55"/>
  <g fill="#9aa4b2"><rect x="10" y="17.5" width="68" height="1"/><rect x="10" y="21.5" width="78" height="1"/><rect x="11" y="24.5" width="36" height="1"/><rect x="10" y="32" width="78" height="1"/><rect x="10" y="35.5" width="60" height="1"/><rect x="10" y="39" width="54" height="1"/></g>
  <rect x="10" y="27.5" width="52" height="3" fill="#ffff55"/>
  <rect x="11.5" y="46" width="87" height="11" fill="#fff" stroke="#7a90a8" stroke-width="0.9"/>
  <g fill="#a0aab8"><rect x="13" y="49" width="80" height="1"/><rect x="13" y="52" width="82" height="1"/></g>
  <rect x="84" y="34" width="4" height="8" rx="1" fill="#e58bc0"/><rect x="89" y="34" width="4" height="8" rx="1" fill="#3a6fa8"/>
  <path d="M82 45 L86 38 M97 45 L93 38" stroke="#3a2a20" stroke-width="1.6"/>
 </svg>
 <svg class="a" style="left:69px;top:212.5px" width="14" height="18"><path d="M1.3 1.2 V13.5 L4.4 10.8 L6.8 15.8 L8.8 14.9 L6.6 10.1 H10.6Z" fill="#fff" stroke="#333" stroke-width="0.9"/></svg>
 <div class="t" style="left:2px;top:279px;font-family:'Liberation Serif',serif;font-size:14px;color:#444">8</div>
 <div class="a" style="left:21px;top:281.5px;width:102.5px;height:58px;background:#fefefe;border-radius:3px;box-shadow:0 0 0 1px #dcdcdc"></div>
 <svg class="a" style="left:21px;top:281.5px" width="103" height="58">
  <rect x="0.3" y="2.5" width="20.5" height="8.5" fill="#0e3561"/>
  <text x="23" y="8.5" font-family="Liberation Sans" font-size="4.6" font-weight="bold" fill="#3a4658">Design and Innovation</text>
  <path d="M21 36 L37 20 L53 36 L37 52Z" fill="none" stroke="#e0569e" stroke-width="0.9"/>
  <path d="M53 36 L70 20 L87 36 L70 52Z" fill="none" stroke="#b04a9a" stroke-width="0.9"/>
  <circle cx="21" cy="36" r="1.3" fill="#3b8fd8"/><circle cx="53" cy="36" r="1.3" fill="#3b8fd8"/><circle cx="87" cy="36" r="1.3" fill="#3b8fd8"/>
  <circle cx="37" cy="35" r="3" fill="none" stroke="#bbb" stroke-width="0.6"/><circle cx="70" cy="35" r="3.5" fill="none" stroke="#bbb" stroke-width="0.6"/>
  <g fill="#e0569e"><rect x="25" y="19" width="7" height="1"/><rect x="42" y="19" width="6" height="1"/><rect x="58" y="19" width="7" height="1"/><rect x="75" y="19" width="7" height="1" fill="#8a5a9a"/></g>
 </svg>
 <div class="t" style="left:2px;top:355px;font-family:'Liberation Serif',serif;font-size:14px;color:#444">9</div>
 <div class="a" style="left:21px;top:357px;width:102.5px;height:58px;background:#fefefe;border-radius:3px;box-shadow:0 0 0 1px #dcdcdc"></div>
 <svg class="a" style="left:21px;top:357px" width="103" height="58">
  <rect x="0.3" y="2.5" width="20.5" height="8.5" fill="#0e3561"/>
  <text x="23" y="8.5" font-family="Liberation Sans" font-size="4.6" font-weight="bold" fill="#3a4658">Design and Innovation</text>
  <rect x="8" y="14" width="14" height="1" fill="#777"/>
  <rect x="9" y="16.5" width="10" height="2.5" fill="#ffff55"/>
  <g fill="#888"><rect x="19" y="17" width="69" height="1"/><rect x="9" y="20" width="80" height="1"/><rect x="9" y="23" width="78" height="1"/><rect x="9" y="26" width="40" height="1"/></g>
 </svg>
</div>
<!-- ribbon -->
<div class="a" style="left:1px;top:238px;width:1032px;height:81.5px;background:#fdfdfd;border-radius:7px;box-shadow:0 1px 2px rgba(0,0,0,0.13)"></div>
<svg class="a" style="left:0;top:238px" width="1040" height="82">
 <g fill="#e1e1e1">
  <rect x="82.5" y="5" width="1" height="72"/><rect x="199.5" y="5" width="1" height="72"/><rect x="380.5" y="5" width="1" height="72"/>
  <rect x="550" y="5" width="1" height="72"/><rect x="711" y="5" width="1" height="72"/><rect x="755.5" y="5" width="1" height="72"/>
  <rect x="802.5" y="5" width="1" height="72"/><rect x="862" y="5" width="1" height="72"/><rect x="913.5" y="5" width="1" height="72"/><rect x="969" y="5" width="1" height="72"/>
  <rect x="454" y="3" width="1" height="20"/><rect x="430" y="24" width="1" height="20"/><rect x="475" y="24" width="1" height="20"/>
  <rect x="307.5" y="46" width="1" height="19"/><rect x="352" y="46" width="1" height="19"/>
 </g>
 <!-- clipboard paste -->
 <path d="M17 9.5 H21 Q21 6 24 6 Q27 6 27 9.5 H31 V31 H17Z" fill="#f7e7c6" stroke="#d9962e" stroke-width="1.1"/>
 <rect x="21.5" y="8.5" width="5" height="3" fill="#fff" stroke="#777" stroke-width="0.9"/>
 <rect x="24.5" y="14.5" width="13.5" height="18" fill="#f4f4f4" stroke="#555" stroke-width="1.1"/>
 <path d="M21.5 52 L23.5 54 L25.5 52" stroke="#444" stroke-width="1" fill="none"/>
 <!-- scissors -->
 <path d="M50 7 L56.5 17 M56 7 L49.5 17" stroke="#555" stroke-width="0.9"/>
 <circle cx="50.5" cy="18.5" r="1.9" stroke="#2b73c7" stroke-width="1.1" fill="none"/><circle cx="55.5" cy="18.5" r="1.9" stroke="#2b73c7" stroke-width="1.1" fill="none"/>
 <!-- copy -->
 <path d="M47.5 28 V39 H51 M47.5 28 H53 L54 29" stroke="#555" stroke-width="1" fill="none"/>
 <path d="M51 31 H56.5 L59.5 34 V42 H51Z" stroke="#555" stroke-width="1" fill="none"/>
 <path d="M53 38 H57.5" stroke="#888" stroke-width="0.8"/>
 <path d="M67 34 L69 36 L71 34" stroke="#444" stroke-width="1" fill="none"/>
 <!-- painter -->
 <path d="M49 56 L55 50.5 L58.5 54 L53 60 Z" fill="#f0a030" stroke="#c46c1a" stroke-width="0.8"/>
 <path d="M55.5 52 L59.5 48 M57 53.5 L60.5 50" stroke="#444" stroke-width="1.2"/>
 <path d="M74 72.5 H80 V78 M77.5 75.5 L80 78" stroke="#888" stroke-width="0.8" fill="none"/>
 <!-- new slide -->
 <rect x="95.5" y="13" width="23" height="16" fill="#fff" stroke="#666" stroke-width="1.3"/>
 <path d="M95.5 16.5 H118.5 M107 16.5 V29" stroke="#666" stroke-width="1.1"/>
 <path d="M100 5 V17 M94 11 H106" stroke="#34a853" stroke-width="1.2"/>
 <!-- reuse -->
 <rect x="131" y="12" width="23" height="17" fill="#fff" stroke="#666" stroke-width="1.3"/>
 <rect x="133" y="15" width="20" height="14" fill="#f3f3f3" stroke="#888" stroke-width="0.8"/>
 <circle cx="146" cy="22" r="4.8" fill="#fff" stroke="#2b7bd6" stroke-width="1.1"/>
 <path d="M149.5 25.5 L154.5 30.5" stroke="#2b7bd6" stroke-width="1.2"/>
 <!-- small slide icons -->
 <rect x="164.5" y="8" width="12" height="9.5" fill="#fff" stroke="#555" stroke-width="1.1"/><path d="M167 10.5 V15 H169.5 V10.5Z M171.5 10.5 V15 H174 V10.5Z" fill="#ddd" stroke="#777" stroke-width="0.6"/>
 <path d="M182 12 L184 14 L186 12" stroke="#444" stroke-width="1" fill="none"/>
 <rect x="164.5" y="30" width="12" height="9.5" fill="#fff" stroke="#555" stroke-width="1.1"/><path d="M166 29 Q167.5 27 170 28.5 M166 29 L167.5 27.5 M166 29 L168 30" stroke="#2b7bd6" stroke-width="1" fill="none"/>
 <rect x="164.5" y="51" width="12" height="9.5" fill="#fff" stroke="#555" stroke-width="1.1"/><rect x="164.5" y="50" width="12" height="2" fill="#34a853"/>
 <path d="M182 55 L184 57 L186 55" stroke="#444" stroke-width="1" fill="none"/>
 <!-- font boxes -->
 <rect x="206.5" y="3.3" width="128.5" height="19" rx="3.5" fill="#efefef"/>
 <rect x="337.5" y="3.3" width="36.5" height="19" rx="3.5" fill="#efefef"/>
 <path d="M328 12 L330 14 L332 12 M367 12 L369 14 L371 12" stroke="#aaa" stroke-width="0.9" fill="none"/>
 <g stroke="#a5a5a5" fill="none" stroke-width="1">
   <path d="M262 56 L264 58 L266 56 M233 56 L235 58 L237 56 M297 56 L299 58 L301 56 M336 36 L338 38 L340 36"/>
  <path d="M395 12 L397 14 L399 12 M411 12 L413 14 L415 12 M444 12 L446 14 L448 12 M479 12 L481 14 L483 12 M533 12 L535 14 L537 12 M499 35 L501 37 L503 35 M533 35 L535 37 L537 35 M473 56 L475 58 L477 56 M533 56 L535 58 L537 56"/>
 </g>
 <!-- font icons (disabled) -->
 <g fill="#a0a0a0" font-family="Liberation Sans" font-size="11">
  <text x="209" y="38" font-weight="bold">B</text>
  <text x="233" y="38" font-style="italic" font-family="Liberation Serif">I</text>
  <text x="254" y="38">U</text>
  <text x="275" y="38">S</text>
  <text x="296" y="37.5" font-size="9">ab</text>
  <text x="314" y="36" font-size="10">AV</text>
  <text x="245" y="59" font-size="11">A</text>
  <text x="275" y="59" font-size="10">Aa</text>
  <text x="313" y="59" font-size="12">A</text>
  <text x="336" y="59" font-size="11">A</text>
  <text x="357" y="59" font-size="12">A</text>
 </g>
 <g stroke="#a5a5a5" fill="none" stroke-width="0.8">
  <path d="M256 39 H263 M295 34 H308 M316 37 H330 M316 37 l2 -1.5 M330 37 l-2 -1.5 M323.5 51 l1.5 -1.5 l1.5 1.5 M345 50 l1.5 1.5 l1.5 -1.5"/>
  <path d="M212 59 L219 51.5 L221.5 54 L214.5 61.5 Z M212 59 L211 62 L214.5 61.5"/>
  <path d="M363 62 L369 56 L372 59 L366 65Z"/>
 </g>
 <rect x="210" y="60.5" width="13" height="2.3" fill="#b5b5b5"/>
 <rect x="243" y="60.5" width="13" height="2.3" fill="#b5b5b5"/>
 <!-- paragraph icons -->
 <g stroke="#a8a8a8" stroke-width="1" fill="none">
  <path d="M394 8.5 H403 M394 13 H403 M394 17.5 H403"/><path d="M390.5 8.5 h1.5 M390.5 13 h1.5 M390.5 17.5 h1.5" stroke-width="1.5"/>
  <path d="M427 8.5 H436 M427 13 H436 M427 17.5 H436"/>
  <path d="M465 8.5 H472 M465 12 H472 M465 15.5 H472 M465 19 H472 M461 9 V19 M459.5 10.5 L461 9 L462.5 10.5 M459.5 17.5 L461 19 L462.5 17.5"/>
  <path d="M516 9 V20 M514.5 18.5 L516 20 L517.5 18.5 M524 13 V20 M522.5 18.5 L524 20 L525.5 18.5"/>
  <path d="M391 31 H403 M396 34.5 H403 M396 38 H403 M391 41.5 H403 M395 36 L392 36 M393 34.5 L391.5 36 L393 37.5"/>
  <path d="M412 31 H424 M417 34.5 H424 M417 38 H424 M412 41.5 H424 M412 36 L415 36 M414 34.5 L415.5 36 L414 37.5"/>
  <path d="M482 34 H491 M482 38 H491"/>
  <path d="M514.5 31.5 H528 V42 H514.5Z M521 30 V43"/>
  <path d="M391 52.5 H403 M391 56 H400 M391 59.5 H403 M391 63 H400"/>
  <path d="M412 52.5 H424 M414 56 H422 M412 59.5 H424 M414 63 H422"/>
  <path d="M433 52.5 H445 M436 56 H445 M433 59.5 H445 M436 63 H445"/>
  <path d="M454 52.5 H467 M454 56 H467 M454 59.5 H467 M454 63 H467"/>
  <path d="M514.5 53 L522 53 L527 58 M517 57 H527 V63 H520 V57"/>
 </g>
 <g fill="#aaa" font-family="Liberation Sans" font-size="9"><text x="437" y="40">›¶</text><text x="458" y="40">¶‹</text></g>
 <!-- shapes -->
 <rect x="562.5" y="10" width="16" height="15" fill="#7fb2e5" stroke="#3d8fd8" stroke-width="0.9" stroke-dasharray="1.5 0.8"/>
 <circle cx="577.5" cy="22.5" r="7.8" fill="#fff" stroke="#555" stroke-width="1.2"/>
 <!-- arrange -->
 <rect x="601" y="10" width="9.5" height="9.5" fill="#fff" stroke="#555" stroke-width="1.1"/>
 <rect x="604.5" y="13.5" width="12.5" height="14" fill="#f6c467" stroke="#e0a030" stroke-width="0.9"/>
 <rect x="614.5" y="23" width="9.5" height="9.5" fill="#fff" stroke="#555" stroke-width="1.1"/>
 <!-- quick styles -->
 <rect x="640.5" y="10" width="23" height="22" rx="1.5" fill="#f2f2f2" stroke="#c8c8c8" stroke-width="1"/>
 <path d="M648 31 L660 19 L664 15" stroke="#b5b5b5" stroke-width="2"/>
 <!-- fill/outline/effects -->
 <path d="M678 14 L683 9 L688 14 L683 19Z" fill="none" stroke="#aaa" stroke-width="1"/><rect x="676" y="19.5" width="13" height="2" fill="#b9b9b9"/>
 <path d="M677 29 H684 M677 29 V37 H687 V33 M682 35 L688 29" fill="none" stroke="#aaa" stroke-width="1"/><rect x="676" y="39.5" width="13" height="2" fill="#b9b9b9"/>
 <path d="M677 57 L682 52 L689 54 L685 60 L678 59Z" fill="none" stroke="#aaa" stroke-width="1.1"/>
 <path d="M696 12 L698 14 L700 12 M696 33 L698 35 L700 33 M696 56 L698 58 L700 56" stroke="#aaa" stroke-width="0.9" fill="none"/>
 <path d="M705 73 H711 V79 M708.5 76.5 L711 79" stroke="#aaa" stroke-width="0.8" fill="none"/>
 <path d="M370 73 H376 V79 M373.5 76.5 L376 79 M541 73 H547 V79 M544.5 76.5 L547 79" stroke="#aaa" stroke-width="0.8" fill="none"/>
 <!-- editing -->
 <circle cx="737.5" cy="15.5" r="8" fill="none" stroke="#555" stroke-width="1.1"/>
 <path d="M732 21.5 L722 31" stroke="#555" stroke-width="1.1"/>
 <!-- dictate -->
 <rect x="773.5" y="6" width="10.5" height="19" rx="5.2" fill="#7ab0e6" stroke="#3d86d0" stroke-width="1"/>
 <path d="M770.5 19 Q770.5 27.5 778.7 27.5 Q787 27.5 787 19 M778.7 27.5 V31" stroke="#555" stroke-width="1.1" fill="none"/>
 <!-- sensitivity -->
 <path d="M824 8.5 H836 M824 8.5 V30.5 H845 V20" stroke="#3d8fd8" stroke-width="1.1" fill="none"/>
 <path d="M828 25 L836.5 16.5 L839.5 19.5 L831 28Z" fill="#8cc0ee" stroke="#3d8fd8" stroke-width="0.9"/>
 <path d="M835 12 L839 8 L846 15 L842 19 Z" fill="#8cc0ee" stroke="#3d8fd8" stroke-width="0.9"/>
 <!-- add-ins -->
 <rect x="877.5" y="8.5" width="23" height="23" fill="#fff" stroke="#d5573b" stroke-width="1.2"/>
 <rect x="880.5" y="11.5" width="7.5" height="7.5" fill="#fff" stroke="#d5573b" stroke-width="1"/><rect x="890.5" y="11.5" width="7.5" height="7.5" fill="#fff" stroke="#d5573b" stroke-width="1"/>
 <rect x="880.5" y="21" width="7.5" height="7.5" fill="#fff" stroke="#d5573b" stroke-width="1"/><rect x="890.5" y="21" width="7.5" height="7.5" fill="#fff" stroke="#d5573b" stroke-width="1"/>
 <!-- designer -->
 <rect x="930.5" y="9.5" width="22.5" height="17" fill="#f2f2f2" stroke="#666" stroke-width="1.6"/>
 <path d="M930.5 14 H953 M945 14 V26.5" stroke="#666" stroke-width="1.3"/>
 <path d="M935 5 L929 15 H933 L930 22 L939 12 H935 L939 5Z" fill="#f2a92e" stroke="#e08a10" stroke-width="0.6"/>
 <!-- collapse chevron -->
 <path d="M1017 68.5 L1021 72.5 L1025 68.5" stroke="#444" stroke-width="1.1" fill="none"/>
 <!-- dropdown chevrons for big buttons -->
 <path d="M571.5 52 L573.5 54 L575.5 52 M609.5 52 L611.5 54 L613.5 52 M731 50.5 L733 52.5 L735 50.5 M776.5 52 L778.5 54 L780.5 52 M830.5 51.5 L832.5 53.5 L834.5 51.5 M115 52 L117 54 L119 52" stroke="#444" stroke-width="1" fill="none"/>
</svg>
<div style="font-size:9.4px;color:#3a3a3a">
<div class="t" style="left:14px;top:275px">Paste</div>
<div class="t" style="left:97px;top:273.5px">New</div>
<div class="t" style="left:91px;top:286px">Slide</div>
<div class="t" style="left:130px;top:273.5px">Reuse</div>
<div class="t" style="left:129.5px;top:286px">Slides</div>
<div class="t" style="left:558px;top:273.5px">Shapes</div>
<div class="t" style="left:595px;top:273.5px">Arrange</div>
<div class="t" style="left:640px;top:273.5px;color:#b3b3b3">Quick</div>
<div class="t" style="left:636px;top:286px;color:#b3b3b3">Styles</div>
<div class="t" style="left:719px;top:272px">Editing</div>
<div class="t" style="left:764px;top:274.5px">Dictate</div>
<div class="t" style="left:811px;top:273.5px">Sensitivity</div>
<div class="t" style="left:871px;top:273.5px">Add-ins</div>
<div class="t" style="left:922px;top:273.5px">Designer</div>
</div>
<div style="font-size:8.6px;color:#555">
<div class="t" style="left:17px;top:308px">Clipboard</div>
<div class="t" style="left:130px;top:308px">Slides</div>
<div class="t" style="left:275px;top:308px">Font</div>
<div class="t" style="left:439px;top:308px">Paragraph</div>
<div class="t" style="left:608px;top:308px">Drawing</div>
<div class="t" style="left:769px;top:308px">Voice</div>
<div class="t" style="left:812px;top:308px">Sensitivity</div>
<div class="t" style="left:873px;top:308px">Add-ins</div>
</div>
<!-- phones -->
<svg class="a" style="left:765px;top:520px" width="105" height="75">
 <path d="M19 24 Q21 17 24 22 L24 52 L46 52 L46 24 Q50 19 52 26 L52 48 Q50 62 36 70 H4 Q12 55 18 45Z" fill="#3a2418"/>
 <path d="M55.5 28 Q57 21 60 25 L60 53 L80 53 L80 24 Q85 17 88 25 Q88 40 90 50 Q95 62 99 70 H78 Q66 62 56 52Z" fill="#3a2418"/>
 <rect x="23.3" y="5.5" width="23" height="48" rx="3" fill="#3a2a28"/>
 <rect x="24.5" y="7" width="20.5" height="45" rx="2" fill="url(#pinkg)"/>
 <rect x="59.2" y="10" width="21" height="43.5" rx="3" fill="#1a2430"/>
 <rect x="60.5" y="11.5" width="18.5" height="40.5" rx="2" fill="url(#blueg)"/>
 <defs>
  <linearGradient id="pinkg" x1="0" y1="0" x2="1" y2="1"><stop offset="0" stop-color="#f2c8c0"/><stop offset="0.45" stop-color="#c86aa0"/><stop offset="0.55" stop-color="#a0487a"/><stop offset="1" stop-color="#f0a8d8"/></linearGradient>
  <linearGradient id="blueg" x1="0" y1="0" x2="1" y2="1"><stop offset="0" stop-color="#5ad0c8"/><stop offset="0.4" stop-color="#2a5a9a"/><stop offset="0.6" stop-color="#1a2a5a"/><stop offset="1" stop-color="#d070a0"/></linearGradient>
 </defs>
</svg>
<!-- next slide button -->
<div class="a" style="left:1013px;top:430px;width:27px;height:45.5px;background:#8f8f8f;border-radius:7px 0 0 7px"></div>
<svg class="a" style="left:1013px;top:430px" width="27" height="46"><path d="M10.5 14.5 L19.5 22.5 L10.5 30.5" stroke="#fff" stroke-width="2.6" fill="none" stroke-linecap="round" stroke-linejoin="round"/><rect x="16" y="25" width="7" height="14" rx="3.5" fill="#474747"/></svg>
<!-- chat overlay -->
<div class="a" style="left:8px;top:692px;width:193px;height:39px;background:rgba(72,72,72,0.8);border-radius:7px"></div>
<svg class="a" style="left:8px;top:692px" width="193" height="39">
 <circle cx="21" cy="19.5" r="10.5" fill="#e9e9e9"/>
 <rect x="16.5" y="14" width="2" height="4.5" rx="1" fill="#555"/><rect x="23.5" y="14" width="2" height="4.5" rx="1" fill="#555"/>
 <path d="M15.5 21.5 Q21 28 26.5 21.5Z" fill="#555"/>
 <rect x="40" y="7" width="1" height="25" fill="#8a8a8a"/>
 <rect x="152.5" y="7" width="1" height="25" fill="#8a8a8a"/>
 <path d="M175.5 14 L169.5 20 L175.5 26" stroke="#fff" stroke-width="2.4" fill="none" stroke-linecap="round" stroke-linejoin="round"/>
</svg>
<div class="t" style="left:61px;top:704.3px;font-size:16px;color:#cacaca">说点什么...</div>
</body></html>
